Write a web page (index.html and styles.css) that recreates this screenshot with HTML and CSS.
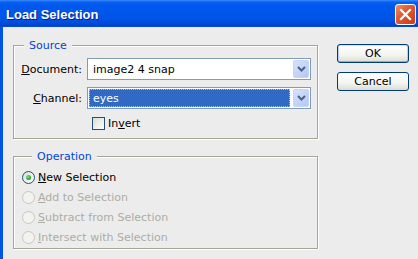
FILE: index.html
```html
<!DOCTYPE html>
<html lang="en">
<head>
  <meta charset="UTF-8" />
  <meta name="viewport" content="width=device-width, initial-scale=1" />
  <title>Load Selection</title>
  <link rel="stylesheet" href="styles.css">
</head>
<body>
  <div class="window">
    <div class="titlebar">
      <span class="title">Load Selection</span>
      <button class="close" aria-label="Close">
        <svg width="13" height="13" viewBox="0 0 13 13">
          <path d="M2 2 L11 11 M11 2 L2 11" stroke="#fff" stroke-width="2.2" stroke-linecap="square" fill="none" />
        </svg>
      </button>
    </div>

    <div class="client">
      <div class="groups">
        <fieldset class="group source">
          <legend>Source</legend>
          <div class="form">
            <label class="field-label"><u>D</u>ocument:</label>
            <div class="select">
              <span class="value">image2 4 snap</span>
              <span class="drop">
                <svg width="9" height="6" viewBox="0 0 9 6"><path d="M1 1 L4.5 4.5 L8 1" stroke="#4d6185" stroke-width="2" fill="none" /></svg>
              </span>
            </div>

            <label class="field-label"><u>C</u>hannel:</label>
            <div class="select focused">
              <span class="value">eyes</span>
              <span class="drop">
                <svg width="9" height="6" viewBox="0 0 9 6"><path d="M1 1 L4.5 4.5 L8 1" stroke="#4d6185" stroke-width="2" fill="none" /></svg>
              </span>
            </div>

            <span></span>
            <label class="check"><span class="box"></span><span>In<u>v</u>ert</span></label>
          </div>
        </fieldset>

        <fieldset class="group operation">
          <legend>Operation</legend>
          <label class="radio checked"><span class="dot"></span><span><u>N</u>ew Selection</span></label>
          <label class="radio disabled"><span class="dot"></span><span><u>A</u>dd to Selection</span></label>
          <label class="radio disabled"><span class="dot"></span><span><u>S</u>ubtract from Selection</span></label>
          <label class="radio disabled"><span class="dot"></span><span><u>I</u>ntersect with Selection</span></label>
        </fieldset>
      </div>

      <div class="buttons">
        <button class="btn default">OK</button>
        <button class="btn">Cancel</button>
      </div>
    </div>
  </div>
</body>
</html>
```

FILE: styles.css
```css
body {
  margin: 0;
  background: #ececec;
  font-family: "DejaVu Sans", Verdana, sans-serif;
  font-size: 11px;
  color: #000;
  overflow: hidden;
}

.window {
  width: 418px;
  height: 259px;
  display: flex;
  flex-direction: column;
}

/* title bar */
.titlebar {
  height: 27px;
  flex-shrink: 0;
  box-sizing: border-box;
  display: flex;
  align-items: center;
  justify-content: space-between;
  padding: 0 2px 0 6px;
  background: linear-gradient(#3a8cff 0, #0a62f0 2px, #0058ee 5px, #0055e8 18px, #0049d8 24px, #003fc4 26px, #0a55dd 27px);
}

.title {
  font-family: "Liberation Sans", Arial, sans-serif;
  font-weight: bold;
  font-size: 13px;
  color: #fff;
  text-shadow: 1px 1px 0 #0a2080;
  margin-top: 1px;
}

.close {
  width: 21px;
  height: 21px;
  padding: 0;
  margin-top: 1px;
  border: 1px solid #fff;
  border-radius: 3px;
  background: linear-gradient(135deg, #f0906c 0%, #e05a32 40%, #c93a12 100%);
  display: flex;
  align-items: center;
  justify-content: center;
}

/* dialog body */
.client {
  flex: 1;
  display: flex;
  border-left: 3px solid #0055e8;
  padding: 12px 0 0 10px;
}

.groups {
  width: 305px;
  display: flex;
  flex-direction: column;
  gap: 11px;
}

.group {
  margin: 0;
  padding: 0;
  min-width: 0;
  border: 1px solid #a5a594;
  box-shadow: inset 1px 1px 0 #fff, 1px 1px 0 #fff;
}

.group legend {
  margin-left: 10px;
  padding: 0 5px;
  line-height: 13px;
  color: #0046d5;
  background: #ececec;
}

.form {
  display: grid;
  grid-template-columns: 68px 224px;
  column-gap: 5px;
  row-gap: 7px;
  align-items: center;
  padding: 6px 0 8px;
}

.field-label {
  text-align: right;
}

.select {
  height: 22px;
  box-sizing: border-box;
  display: flex;
  align-items: stretch;
  padding: 1px;
  border: 1px solid #7f9db9;
  background: #fff;
}

.select .value {
  flex: 1;
  display: flex;
  align-items: center;
  padding-left: 4px;
  margin-right: 3px;
}

.select.focused .value {
  background: #316ac5;
  color: #fff;
  outline: 1px dotted #e8c040;
  outline-offset: -1px;
}

.drop {
  width: 16px;
  box-sizing: border-box;
  display: flex;
  align-items: center;
  justify-content: center;
  border-radius: 2px;
  border: 1px solid #c6d4f7;
  background: linear-gradient(135deg, #d6e1fc, #b4c7f4);
}

.check {
  display: flex;
  align-items: center;
  gap: 3px;
  margin-left: 5px;
  margin-top: 1px;
  line-height: 13px;
}

.check .box {
  width: 13px;
  height: 13px;
  box-sizing: border-box;
  border: 1px solid #1c5180;
  background: linear-gradient(135deg, #dcdcd5, #fff);
}

/* radio buttons */
.operation {
  padding: 4px 0 1px 8px;
}

.radio {
  height: 20px;
  display: flex;
  align-items: center;
  gap: 3px;
}

.radio .dot {
  width: 13px;
  height: 13px;
  box-sizing: border-box;
  border-radius: 50%;
  border: 1px solid #1c5180;
  background: linear-gradient(135deg, #dcdcd5, #fff);
  display: flex;
  align-items: center;
  justify-content: center;
}

.radio.checked .dot::after {
  content: "";
  width: 5px;
  height: 5px;
  border-radius: 50%;
  background: radial-gradient(circle at 35% 35%, #7ee07e, #21a121 70%);
}

.radio.disabled {
  color: #acaca4;
}

.radio.disabled .dot {
  border-color: #cac8bb;
  background: #f2f2ee;
}

/* buttons */
.buttons {
  display: flex;
  flex-direction: column;
  gap: 9px;
  margin: 5px 0 0 19px;
}

.btn {
  width: 72px;
  height: 19px;
  padding: 0;
  font-family: inherit;
  font-size: 11px;
  color: #000;
  border: 1px solid #003c74;
  border-radius: 3px;
  background: linear-gradient(#fff, #f4f4f0 60%, #dcdcd4);
}

.btn.default {
  box-shadow: inset 0 -1px 0 #8aaaf0, inset 1px 0 0 #b8d0f8, inset -1px 0 0 #b8d0f8, inset 0 1px 0 #cee0ff;
}
```
